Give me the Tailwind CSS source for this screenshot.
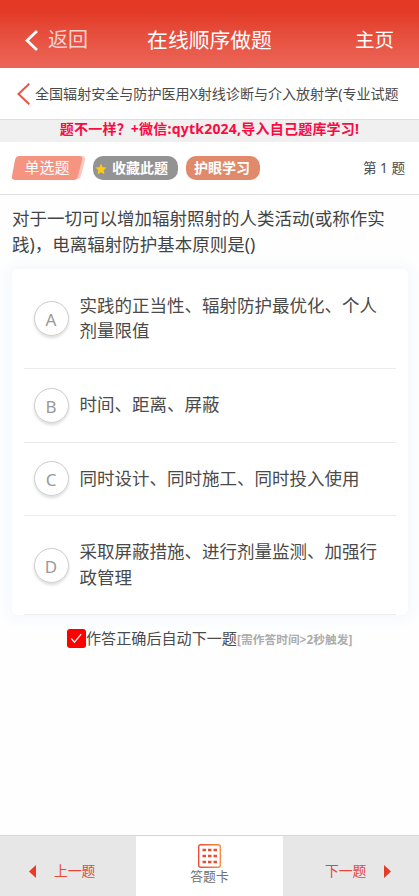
<!DOCTYPE html>
<html lang="zh-CN">
<head>
<meta charset="utf-8">
<meta name="viewport" content="width=device-width, initial-scale=1">
<title>在线顺序做题</title>
<script src="https://cdn.jsdelivr.net/npm/@tailwindcss/browser@4"></script>
</head>
<body class="h-[896px] overflow-hidden bg-[#fefefe] font-['Noto_Sans','Noto_Sans_CJK_SC',sans-serif] text-[#4a4a4a] flex flex-col whitespace-nowrap">
<header class="h-[68px] shrink-0 grid grid-cols-[120px_1fr_120px] items-center pt-3 bg-linear-to-b from-[#e33925] from-15% to-[#eb6658] text-white">
  <div class="flex items-center pl-[25px] gap-2.5 text-[20px] leading-6 text-white/75">
    <svg class="w-[13px] h-[21px]" viewBox="0 0 13 21" fill="none" stroke="#fff" stroke-width="2.8"><path d="M12 1 2 10.5 12 20"/></svg>
    <span>返回</span>
  </div>
  <h1 class="text-center text-[20.8px] leading-6">在线顺序做题</h1>
  <div class="text-right pr-[25px] text-[19.5px] leading-6">主页</div>
</header>
<div class="h-[52px] shrink-0 flex items-center pl-[17px] gap-[5px] bg-white border-b border-[#dedede]">
  <svg class="w-[13px] h-[22px]" viewBox="0 0 13 22" fill="none" stroke="#ea5545" stroke-width="2"><path d="M12.3 .7 1.5 11l10.800 10.300"/></svg>
  <span class="text-[14.05px] leading-5">全国辐射安全与防护医用X射线诊断与介入放射学(专业试题</span>
</div>
<div class="h-[22px] shrink-0 bg-[#f0f0f0] text-center text-[14px] tracking-[0.22px] leading-[18px] font-bold text-[#fb0a41]">题不一样？+微信:qytk2024,导入自己题库学习!</div>
<div class="h-[53px] shrink-0 flex items-center pl-3 pr-[14px] border-b border-[#e2e2e2] bg-white text-[14px] leading-5">
  <div class="relative w-[73px] h-6 mr-2">
    <svg class="absolute inset-0 w-full h-full" viewBox="0 0 73 24"><path d="M8 0h62q4 0 3 4l-4 16q-1 3-4 3H10Z" fill="#fbc9bf"/><path d="M7 0h60q4 0 3 4l-4 16q-1 4-4 4H3q-4 0-3-4L3 4q1-4 4-4Z" fill="#f59480"/></svg>
    <span class="relative block text-center pr-[3px] text-[15px] leading-[23px] text-white">单选题</span>
  </div>
  <div class="w-[85px] h-6 rounded-[10px] bg-[#939393] text-white font-bold flex items-center pl-[2px] gap-[5px]">
    <svg class="w-3 h-3 mt-0.5" viewBox="0 0 24 24" fill="#ffca16"><path d="m12 1 3.200 7.500 8 .7-6 5.300 1.800 8-7-4.200-7 4.200 1.800-8-6-5.300 8-.7Z"/></svg>
    <span>收藏此题</span>
  </div>
  <div class="w-[74px] h-6 ml-2 rounded-[10px] bg-[#e08a6b] text-white font-bold pl-2 leading-[24px]">护眼学习</div>
  <div class="ml-auto text-[13.600px]">第 1 题</div>
</div>
<main class="px-3 pt-[11px] shrink-0 text-[17.5px] leading-[25.6px]">
  <p class="text-[#444]">对于一切可以增加辐射照射的人类活动(或称作实<br>践)，电离辐射防护基本原则是()</p>
  <ul class="mt-[12px] h-[346px] w-[396px] px-3 rounded-md bg-white shadow-[0_0_14px_6px_#f5f9fc] grid grid-rows-[99.5px_74px_73.500px_99px]">
    <li class="flex items-center pl-[9.500px] gap-[11px] border-b border-[#ececec]"><span class="size-[35px] shrink-0 rounded-full border border-[#ccc] shadow-[0_2px_3px_#ddd] text-center leading-[35px] text-[17px] text-[#999]">A</span><span>实践的正当性、辐射防护最优化、个人<br>剂量限值</span></li>
    <li class="flex items-center pl-[9.500px] gap-[11px] border-b border-[#ececec]"><span class="size-[35px] shrink-0 rounded-full border border-[#ccc] shadow-[0_2px_3px_#ddd] text-center leading-[35px] text-[17px] text-[#999]">B</span><span class="-mt-px">时间、距离、屏蔽</span></li>
    <li class="flex items-center pl-[9.500px] gap-[11px] border-b border-[#ececec]"><span class="size-[35px] shrink-0 rounded-full border border-[#ccc] shadow-[0_2px_3px_#ddd] text-center leading-[35px] text-[17px] text-[#999]">C</span><span class="-mt-px">同时设计、同时施工、同时投入使用</span></li>
    <li class="flex items-center pl-[9.500px] gap-[11px] border-b border-[#ececec]"><span class="size-[35px] shrink-0 rounded-full border border-[#ccc] shadow-[0_2px_3px_#ddd] text-center leading-[35px] text-[17px] text-[#999]">D</span><span class="-mt-px">采取屏蔽措施、进行剂量监测、加强行<br>政管理</span></li>
  </ul>
</main>
<label class="mt-[10px] pl-[67px] flex items-center text-[15.1px] leading-6">
  <svg class="w-[19px] h-[19px] shrink-0" viewBox="0 0 19 19"><rect width="19" height="19" rx="3" fill="#fe0000"/><path d="m4.300 9.500 3.200 3.700 6.700-8" fill="none" stroke="#fff" stroke-width="1.200"/></svg>
  <span>作答正确后自动下一题</span><span class="text-[11.700px] tracking-[0.08px] font-bold text-[#acacac] pt-0.5">[需作答时间&gt;2秒触发]</span>
</label>
<nav class="mt-auto h-[61px] shrink-0 border-t border-[#d6d6d6] grid grid-cols-[136px_147px_1fr] bg-[#e7e7e7] text-[13.800px] leading-5 text-[#e64635]">
  <div class="flex items-center pl-[29px] pt-[10px] gap-[18px]"><svg class="w-[7px] h-[13px]" viewBox="0 0 7 13" fill="#e63b28"><path d="M7 0v13L0 6.500Z"/></svg><span>上一题</span></div>
  <div class="bg-white flex flex-col items-center pt-2 text-[12.800px] leading-[17px] text-[#707070]">
    <svg class="w-[23px] h-[24px]" viewBox="0 0 23 24" fill="none"><defs><linearGradient id="g" gradientUnits="userSpaceOnUse" x1="0" y1="0" x2="23" y2="0"><stop stop-color="#ea4b38"/><stop offset="1" stop-color="#fa8b42"/></linearGradient></defs><rect x=".7" y=".7" width="21.600" height="22.600" rx="2" stroke="url(#g)" stroke-width="1.400"/><g stroke="#e94e32" stroke-width="2.400"><path d="M4.500 6h3.500m2 0h3.500m2 0H19M4.500 12h3.500m2 0h3.500m2 0H19M4.500 18h3.500m2 0h3.500m2 0H19"/></g></svg>
    <span>答题卡</span>
  </div>
  <div class="flex items-center pl-[42px] pt-[10px] gap-[18px]"><span>下一题</span><svg class="w-[7px] h-[13px]" viewBox="0 0 7 13" fill="#e63b28"><path d="M0 0v13l7-6.500Z"/></svg></div>
</nav>
</body>
</html>
